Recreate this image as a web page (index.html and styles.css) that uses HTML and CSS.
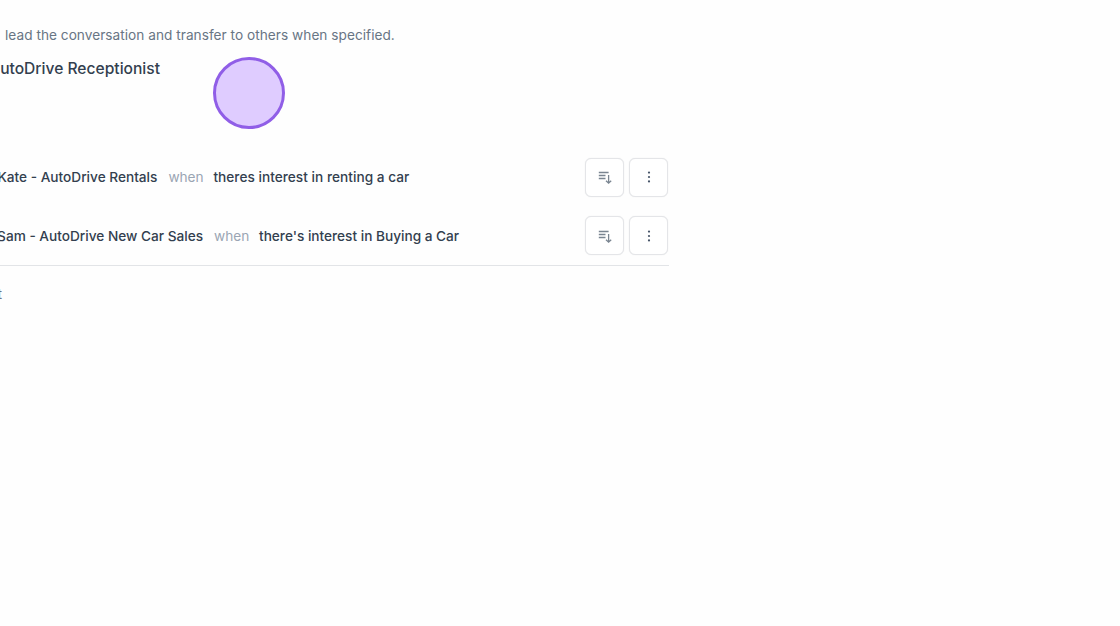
FILE: index.html
```html
<!DOCTYPE html>
<html lang="en">
<head>
<meta charset="utf-8">
<title>AutoDrive Receptionist</title>
<link rel="stylesheet" href="styles.css">
</head>
<body>
<main class="panel">
  <p class="hint">lead the conversation and transfer to others when specified.</p>
  <h1 class="title"><span>utoDrive Receptionist</span></h1>
  <section class="transfers">
    <div class="row">
      <div class="name name-rentals"><span>Kate - AutoDrive Rentals</span></div>
      <span class="when">when</span>
      <span class="condition cond-rentals">theres interest in renting a car</span>
      <div class="actions">
        <button class="btn" aria-label="Reorder"><svg class="icon" viewBox="0 0 16 16"><path d="M1.8 3.5h9.8M1.8 6.5h6.7M1.8 9.5h6.7M11.6 6v8M9 11.8l2.6 2.4 2.6-2.4"/></svg></button>
        <button class="btn" aria-label="More"><svg class="icon dots" viewBox="0 0 16 16"><circle cx="8" cy="3.6" r="1.1"/><circle cx="8" cy="8" r="1.1"/><circle cx="8" cy="12.4" r="1.1"/></svg></button>
      </div>
    </div>
    <div class="row">
      <div class="name name-sales"><span>Sam - AutoDrive New Car Sales</span></div>
      <span class="when">when</span>
      <span class="condition cond-sales">there's interest in Buying a Car</span>
      <div class="actions">
        <button class="btn" aria-label="Reorder"><svg class="icon" viewBox="0 0 16 16"><path d="M1.8 3.5h9.8M1.8 6.5h6.7M1.8 9.5h6.7M11.6 6v8M9 11.8l2.6 2.4 2.6-2.4"/></svg></button>
        <button class="btn" aria-label="More"><svg class="icon dots" viewBox="0 0 16 16"><circle cx="8" cy="3.6" r="1.1"/><circle cx="8" cy="8" r="1.1"/><circle cx="8" cy="12.4" r="1.1"/></svg></button>
      </div>
    </div>
  </section>
  <div class="footer"><span>t</span></div>
</main>
<div class="click-marker"></div>
</body>
</html>
```
FILE: styles.css
```css
* { box-sizing: border-box; }
body {
  margin: 0;
  height: 626px;
  overflow: hidden;
  background: #fefefe;
  font-family: Inter, "Liberation Sans", sans-serif;
  font-size: 13.65px;
  line-height: 20px;
  color: #333f4f;
}
.panel { width: 668.5px; padding-top: 25px; }
.hint { margin: 0; padding-left: 5px; color: #687584; white-space: nowrap; letter-spacing: .03px; }
.title {
  margin: 12px 0 0;
  width: 160px;
  height: 24px;
  display: flex;
  justify-content: flex-end;
  white-space: nowrap;
  font-size: 15.6px;
  line-height: 24px;
  font-weight: 500;
}
.transfers { margin-top: 67px; height: 118px; border-bottom: 1px solid #e2e4e7; }
.row { display: flex; align-items: center; height: 58.5px; white-space: nowrap; }
.name {
  display: flex;
  justify-content: flex-end;
  flex: none;
  font-weight: 500;
}
.name-rentals { width: 157.4px; }
.name-sales { width: 203px; }
.when { margin: 0 10px 0 11px; width: 35px; color: #9aa5b3; }
.condition { font-weight: 500; }
.cond-rentals { letter-spacing: .03px; }
.actions { display: flex; gap: 5px; margin-left: auto; margin-right: .5px; }
.btn {
  display: grid;
  place-items: center;
  width: 39px;
  height: 39px;
  padding: 0;
  border: 1px solid #e4e5e8;
  border-radius: 6px;
  background: #fff;
  box-shadow: 0 0 1px rgba(15, 23, 42, .12);
}
.icon { display: block; width: 16px; height: 16px; fill: none; stroke: #7a8591; stroke-width: 1.3; }
.dots { fill: #475569; stroke: none; }
.footer {
  margin-top: 18px;
  width: 2px;
  height: 20px;
  display: flex;
  justify-content: flex-end;
  color: #687584;
}
.click-marker {
  position: absolute;
  left: 213px;
  top: 57px;
  width: 72px;
  height: 72px;
  border: 3px solid #905ee7;
  border-radius: 50%;
  background: #dfccff;
}
```
